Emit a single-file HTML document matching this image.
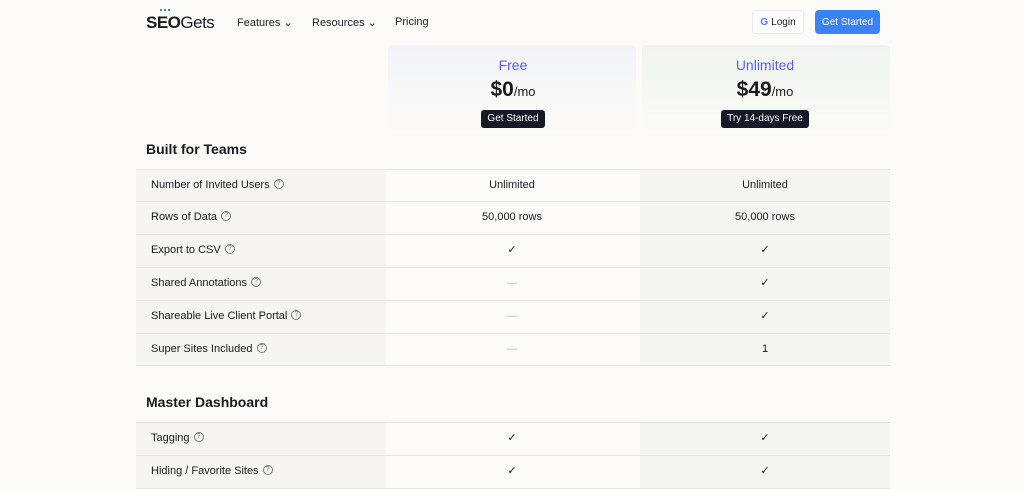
<!DOCTYPE html>
<html><head><meta charset="utf-8"><style>
*{margin:0;padding:0;box-sizing:border-box}
body{width:1024px;height:489px;overflow:hidden;background:#fcfbf8;font-family:"Liberation Sans",sans-serif;color:#1a1a1a;position:relative}
.a{position:absolute}
.nav{font-size:11px;color:#222;top:16px}
.row{position:absolute;left:136px;width:754px;height:33px;border-top:1px solid #e6e4e0;font-size:11px}
.row .l{position:absolute;left:0;width:250px;height:32px;background:#f6f5f2;padding-left:15px;line-height:30px}
.row .f{position:absolute;left:250px;width:252px;height:32px;text-align:center;line-height:30px}
.row .u{position:absolute;left:504px;width:250px;height:32px;background:#f5f5f2;text-align:center;line-height:30px}
.q{display:inline-block;width:10px;height:10px;border:1px solid #777;border-radius:50%;font-size:7px;line-height:8px;text-align:center;color:#777;margin-left:4px;vertical-align:middle;position:relative;top:-1px}
.dash{color:#bbb}
.h{position:absolute;left:146px;font-size:14px;font-weight:bold}
.btn{display:inline-block;background:#141a26;color:#fff;font-size:10px;height:18px;line-height:18px;padding:0 6px;border-radius:3px}
.hb{display:flex;align-items:center;justify-content:center;font-size:10px;border-radius:4px}
</style></head><body>
<div class="a" style="left:146px;top:13px;font-size:17px;font-weight:bold;letter-spacing:-0.5px">SEO<span style="font-weight:normal">Gets</span></div>
<div class="a" style="left:160px;top:9px;width:10px;height:3px;border-top:2px dotted #4a7bea"></div>
<div class="a nav" style="left:237px">Features ⌄</div>
<div class="a nav" style="left:312px">Resources ⌄</div>
<div class="a nav" style="left:395px">Pricing</div>
<div class="a hb" style="left:752px;top:10px;width:52px;height:24px;border:1px solid #e8e8ee;background:#fff"><b style="color:#4285f4;margin-right:3px">G</b>Login</div>
<div class="a hb" style="left:815px;top:10px;width:65px;height:24px;background:#3b82f6;color:#fff">Get Started</div>
<div class="a" style="left:388px;top:45px;width:248px;height:90px;background:linear-gradient(#f3f4f8,#fcfbf8);border-radius:5px"></div>
<div class="a" style="left:642px;top:45px;width:248px;height:90px;background:linear-gradient(#f0f4f1,#fcfbf8);border-radius:5px"></div>
<div class="a" style="left:388px;width:250px;top:57px;text-align:center">
<div style="color:#5a62e0;font-size:14px">Free</div>
<div style="font-size:21px;font-weight:bold;margin-top:5px">$0<span style="font-size:13px;font-weight:normal">/mo</span></div>
<div class="btn" style="margin-top:8px">Get Started</div></div>
<div class="a" style="left:640px;width:250px;top:57px;text-align:center">
<div style="color:#5a62e0;font-size:14px">Unlimited</div>
<div style="font-size:21px;font-weight:bold;margin-top:5px">$49<span style="font-size:13px;font-weight:normal">/mo</span></div>
<div class="btn" style="margin-top:8px">Try 14-days Free</div></div>
<div class="h" style="top:141px">Built for Teams</div>
<div class="row" style="top:169px"><div class="l">Number of Invited Users<span class="q">?</span></div><div class="f">Unlimited</div><div class="u">Unlimited</div></div>
<div class="row" style="top:201px"><div class="l">Rows of Data<span class="q">?</span></div><div class="f">50,000 rows</div><div class="u">50,000 rows</div></div>
<div class="row" style="top:234px"><div class="l">Export to CSV<span class="q">?</span></div><div class="f">✓</div><div class="u">✓</div></div>
<div class="row" style="top:267px"><div class="l">Shared Annotations<span class="q">?</span></div><div class="f dash">—</div><div class="u">✓</div></div>
<div class="row" style="top:300px"><div class="l">Shareable Live Client Portal<span class="q">?</span></div><div class="f dash">—</div><div class="u">✓</div></div>
<div class="row" style="top:333px"><div class="l">Super Sites Included<span class="q">?</span></div><div class="f dash">—</div><div class="u">1</div></div>
<div class="row" style="top:365px;height:1px"></div>
<div class="h" style="top:394px">Master Dashboard</div>
<div class="row" style="top:422px"><div class="l">Tagging<span class="q">?</span></div><div class="f">✓</div><div class="u">✓</div></div>
<div class="row" style="top:455px"><div class="l">Hiding / Favorite Sites<span class="q">?</span></div><div class="f">✓</div><div class="u">✓</div></div>
<div class="row" style="top:488px;height:1px"></div>
</body></html>
